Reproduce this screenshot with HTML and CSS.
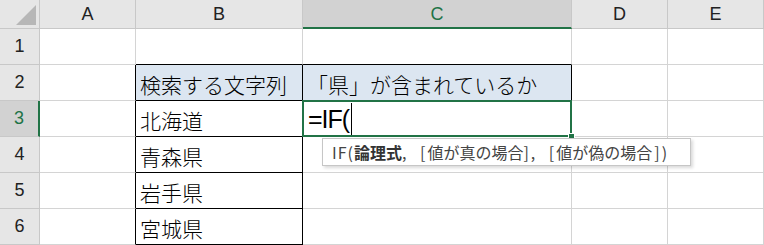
FILE: index.html
```html
<!DOCTYPE html>
<html lang="ja">
<head>
    <meta charset="UTF-8">
    <title>IF関数</title>
    <link rel="stylesheet" href="styles.css">
</head>
<body>
    <div class="sheet">
        <div class="hd corner"><span class="tri"></span></div>
        <div class="hd col">A</div>
        <div class="hd col">B</div>
        <div class="hd col sel">C</div>
        <div class="hd col">D</div>
        <div class="hd col">E</div>

        <div class="hd row">1</div>
        <div class="cell"></div>
        <div class="cell bb"></div>
        <div class="cell bb"></div>
        <div class="cell"></div>
        <div class="cell"></div>

        <div class="hd row">2</div>
        <div class="cell br"></div>
        <div class="cell br bb blue">検索する文字列</div>
        <div class="cell br bb blue">「県」が含まれているか</div>
        <div class="cell"></div>
        <div class="cell"></div>

        <div class="hd row rsel">3</div>
        <div class="cell br"></div>
        <div class="cell br bb">北海道</div>
        <div class="cell active">
            <span class="formula">=IF(</span><span class="caret"></span>
            <span class="handle"></span>
            <div class="tip"><span class="fn">IF(</span><b>論理式</b><span class="p">, [</span>値が真の場合<span class="p">], [</span>値が偽の場合<span class="p end">])</span></div>
        </div>
        <div class="cell"></div>
        <div class="cell"></div>

        <div class="hd row">4</div>
        <div class="cell br"></div>
        <div class="cell br bb">青森県</div>
        <div class="cell"></div>
        <div class="cell"></div>
        <div class="cell"></div>

        <div class="hd row">5</div>
        <div class="cell br"></div>
        <div class="cell br bb">岩手県</div>
        <div class="cell"></div>
        <div class="cell"></div>
        <div class="cell"></div>

        <div class="hd row">6</div>
        <div class="cell br"></div>
        <div class="cell br bb">宮城県</div>
        <div class="cell"></div>
        <div class="cell"></div>
        <div class="cell"></div>
    </div>
</body>
</html>
```

FILE: styles.css
```css
body {
    margin: 0;
    background-color: #fff;
    font-family: "Noto Sans CJK JP", sans-serif;
}

.sheet {
    display: grid;
    grid-template-columns: 40px 96px 167px 269px 96px 96px;
    grid-template-rows: 29px repeat(6, 36px);
    width: 764px;
}

.hd {
    background-color: #e6e6e6;
    border-right: 1px solid #c8c8c8;
    border-bottom: 1px solid #c8c8c8;
    box-sizing: border-box;
    display: flex;
    align-items: center;
    justify-content: center;
    font-family: "Liberation Sans", sans-serif;
    font-size: 18px;
    color: #222;
}

.corner {
    position: relative;
}

.corner .tri {
    position: absolute;
    right: 3px;
    bottom: 3px;
    width: 0;
    height: 0;
    border-left: 20px solid transparent;
    border-bottom: 20px solid #b7b7b7;
}

.col {
    padding-top: 1px;
}

.sel {
    background-color: #d2d2d2;
    color: #217346;
    border-bottom: 2px solid #217346;
}

.row {
    background-color: #e6e6e6;
}

.rsel {
    background-color: #d2d2d2;
    color: #217346;
    border-right: 2px solid #217346;
}

.cell {
    border-right: 1px solid #d4d4d4;
    border-bottom: 1px solid #d4d4d4;
    box-sizing: border-box;
    display: flex;
    align-items: center;
    padding: 2px 0 0 4px;
    font-size: 21px;
    font-weight: 300;
    color: #000;
    white-space: nowrap;
}

.br {
    border-right-color: #000;
}

.bb {
    border-bottom-color: #000;
}

.blue {
    background-color: #dce6f1;
}

.active {
    position: relative;
    padding-left: 5px;
}

.active::after {
    content: "";
    position: absolute;
    top: -1px;
    left: -1px;
    right: -1px;
    bottom: -1px;
    border: 2px solid #217346;
}

.formula {
    font-family: "Liberation Sans", sans-serif;
    font-size: 25px;
    font-weight: 400;
    letter-spacing: -1px;
}

.caret {
    display: inline-block;
    width: 1px;
    height: 33px;
    margin-left: 2px;
    background-color: #000;
}

.handle {
    position: absolute;
    right: -4px;
    bottom: -4px;
    width: 5px;
    height: 5px;
    background-color: #217346;
    border: 1px solid #fff;
    z-index: 2;
}

.tip {
    position: absolute;
    top: 37px;
    left: 19px;
    width: 369px;
    height: 28px;
    box-sizing: border-box;
    padding: 0 0 0 9px;
    background-color: #fff;
    border: 1px solid #c6c6c6;
    box-shadow: 2px 2px 3px rgba(0, 0, 0, 0.15);
    font-size: 16px;
    font-weight: 400;
    line-height: 26px;
    color: #444;
    z-index: 3;
}

.tip b {
    font-weight: 700;
    color: #333;
}

.tip .fn {
    letter-spacing: 1px;
}

.tip .p {
    letter-spacing: 2px;
    word-spacing: 6px;
}

.tip .end {
    margin-left: 2px;
}
```
